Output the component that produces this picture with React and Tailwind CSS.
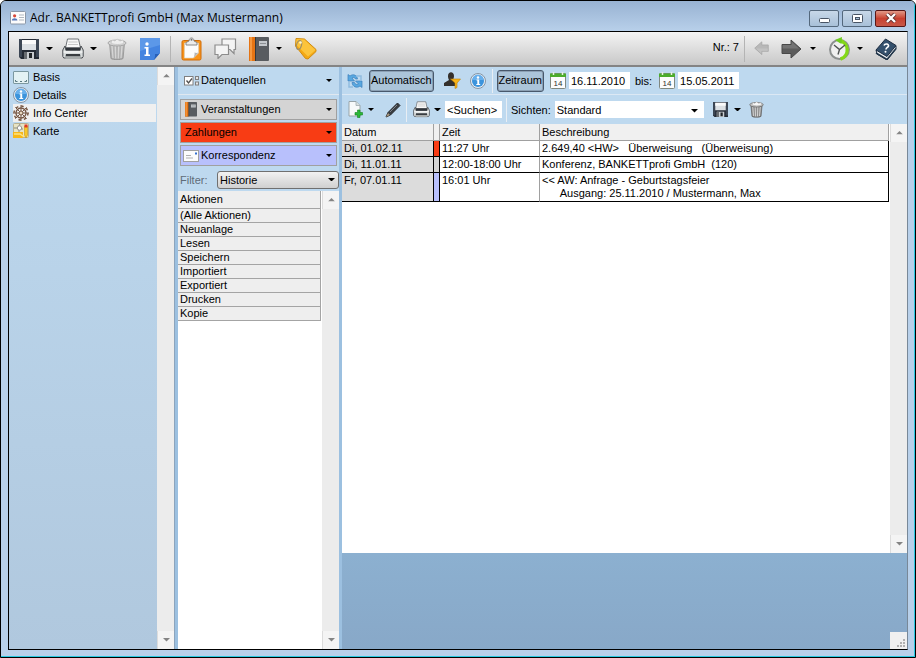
import { useState } from "react";

const NAV = [
  { label: "Basis", Icon: CardIcon },
  { label: "Details", Icon: InfoIcon },
  { label: "Info Center", Icon: WheelIcon },
  { label: "Karte", Icon: MapIcon },
];

const ACTIONS = [
  "(Alle Aktionen)",
  "Neuanlage",
  "Lesen",
  "Speichern",
  "Importiert",
  "Exportiert",
  "Drucken",
  "Kopie",
];

const ENTRIES = [
  {
    date: "Di, 01.02.11",
    time: "11:27 Uhr",
    color: "bg-[#f83c14]",
    lines: ["2.649,40 <HW>   Überweisung   (Überweisung)"],
  },
  {
    date: "Di, 11.01.11",
    time: "12:00-18:00 Uhr",
    color: "bg-[#d4d4d4]",
    lines: ["Konferenz, BANKETTprofi GmbH  (120)"],
  },
  {
    date: "Fr, 07.01.11",
    time: "16:01 Uhr",
    color: "bg-[#b8c0fc]",
    lines: ["<< AW: Anfrage - Geburtstagsfeier", "      Ausgang: 25.11.2010 / Mustermann, Max"],
  },
];

/* ---------- icons ---------- */

function Caret({ className = "w-[7px]" }) {
  return (
    <svg viewBox="0 0 8 4" className={`shrink-0 ${className}`} aria-hidden="true">
      <path d="M0 0h8L4 4z" fill="currentColor" />
    </svg>
  );
}

function ContactIcon() {
  return (
    <svg viewBox="0 0 16 14" className="w-4 shrink-0" aria-hidden="true">
      <rect x=".5" y=".5" width="15" height="12.5" rx="1" fill="#fcfcfc" stroke="#8c98a8" />
      <circle cx="4.600" cy="4.800" r="1.600" fill="#d84838" />
      <path d="M1.800 9.500c0-3 5.600-3 5.600 0z" fill="#5878b8" />
      <path d="M9 4h5M9 6.500h5M9 9h5" stroke="#b0b8c0" />
    </svg>
  );
}

function SaveIcon({ className = "w-5" }) {
  return (
    <svg viewBox="0 0 20 20" className={`shrink-0 ${className}`} aria-hidden="true">
      <path d="M0 0h20v20H2l-2-2z" fill="#242a34" />
      <path d="M0 0h3v18H0zM17 0h3v18h-3z" fill="#3c4654" />
      <path d="M3 1h14v10H3z" fill="#dce0e4" />
      <path d="M3 1h14v4H3z" fill="#fafafa" />
      <path d="M5 13h10v7H5z" fill="#c8ccd0" />
      <path d="M5 13h3v7H5z" fill="#686c70" />
      <path d="M10 14h3v5h-3z" fill="#202428" />
    </svg>
  );
}

function PrintIcon({ className = "w-[22px]" }) {
  return (
    <svg viewBox="0 0 22 22" className={`shrink-0 ${className}`} aria-hidden="true">
      <path d="M5.500 1h11l2 9h-15z" fill="#f8f8f8" stroke="#707478" />
      <path d="M6.500 4h9M6 6.500h10" stroke="#c8c8c8" />
      <path d="M3 8 .8 12v6.500l1 1.500h18.400l1-1.500V12L19 8l-1 4H4z" fill="#d8dcdc" stroke="#484c50" />
      <path d="M4 9.500h14l.5 3h-15z" fill="#30343a" />
      <path d="M1.500 14h19" stroke="#fff" strokeWidth="1.200" />
      <path d="M4 16h14l.500 2.500h-15z" fill="#383c40" />
      <path d="M3.500 18.500h15V21h-15z" fill="#a8acac" />
    </svg>
  );
}

function TrashIcon({ className = "w-5", faded = false }) {
  return (
    <svg viewBox="0 0 20 22" className={`shrink-0 ${className} ${faded ? "opacity-50" : ""}`} aria-hidden="true">
      <path d="m2.500 5 1.500 15.500c2 1.500 10 1.500 12 0L17.500 5z" fill="#8c8c8c" stroke="#606060" />
      <path d="m5 8 1 12M8.300 8l.4 12.500M11.700 8l-.4 12.500M15 8l-1 12" stroke="#d4d4d4" strokeWidth="1.300" />
      <ellipse cx="10" cy="5" rx="9" ry="3" fill="#c8c8c8" stroke="#6c6c6c" />
      <path d="m4 5 1-3 3 1 2-2 3 2 3-1 1 3c-3 2-10 2-13 0z" fill="#f6f6f6" stroke="#9c9c9c" strokeWidth=".7" />
    </svg>
  );
}

function NoteIcon() {
  return (
    <svg viewBox="0 0 20 22" className="w-5 shrink-0" aria-hidden="true">
      <path d="M0 0h20v15l-6 7H0z" fill="#4484e0" />
      <path d="M0 0h20v7L0 13z" fill="#5c98e8" />
      <path d="M20 15c-2 1.500-5 1-5 1 .5 2-1 6-1 6z" fill="#2860b8" />
      <circle cx="7" cy="6" r="1.700" fill="#fff" />
      <path d="M4.500 9h4v7.500H10V18H4.500v-1.500H6v-6H4.500z" fill="#fff" />
    </svg>
  );
}

function ClipboardIcon() {
  return (
    <svg viewBox="0 0 21 24" className="w-[21px] shrink-0" aria-hidden="true">
      <rect x="1" y="3.500" width="19" height="19.500" rx="1.500" fill="#f8941c" stroke="#d06c08" />
      <path d="M3.500 6h14v10l-5 5h-9z" fill="#fcfcfc" stroke="#d8d0c0" strokeWidth=".6" />
      <path d="M17.500 15.500c-2 1-4 0-4 0 .5 2-1 5.500-1 5.500z" fill="#b4b4b4" />
      <path d="M5 8V5.500l3-1.500c0-4 5-4 5 0l3 1.500V8z" fill="#ececec" stroke="#808080" strokeWidth=".9" />
      <circle cx="10.500" cy="2.800" r="1" fill="#707070" />
    </svg>
  );
}

function ChatIcon() {
  return (
    <svg viewBox="0 0 23 21" className="w-[23px] shrink-0" aria-hidden="true">
      <g fill="#f4f4f4" stroke="#8c8c8c" strokeWidth="1.200">
        <path d="M8 1h13.500v10.500H20v4l-4-4H8z" />
        <path d="M1 7h13.500v9.500H8l-4 4v-4H1z" />
      </g>
    </svg>
  );
}

function BinderIcon({ className = "w-5" }) {
  return (
    <svg viewBox="0 0 20 24" className={`shrink-0 ${className}`} aria-hidden="true">
      <rect x="0" y="0" width="20" height="24" rx="1" fill="#585c60" />
      <path d="M0 0h6v24H0z" fill="#e47414" />
      <path d="M1 0h2v24H1z" fill="#f49840" />
      <path d="M6 0h1v24H6z" fill="#34383c" />
      <path d="M10 4h8v5h-8z" fill="#c4c8cc" />
      <path d="M11 6.500h6" stroke="#8c9094" />
    </svg>
  );
}

function TagIcon() {
  return (
    <svg viewBox="0 0 23 23" className="w-[23px] shrink-0" aria-hidden="true">
      <path d="M2 1.500 10.500 2 22 12.500v2L14 22l-2.500-.5L1.500 9z" fill="#f4a814" stroke="#d08c10" />
      <path d="m2.500 2 7.700.5L21.500 13 14 19.500 2 7.500z" fill="#fcc43c" />
      <ellipse cx="5" cy="8" rx="2.500" ry="4.500" fill="none" stroke="#a09068" strokeWidth="1.200" transform="rotate(15 5 8)" />
      <circle cx="6.500" cy="5.500" r="1.300" fill="#fff4d0" />
    </svg>
  );
}

function ArrowIcon({ className, flip = false, dark = false }) {
  return (
    <svg viewBox="0 0 21 20" className={`shrink-0 ${className} ${flip ? "rotate-180" : ""}`} aria-hidden="true">
      <path
        d="M1 5.500h9V1l10 9-10 9v-4.500H1z"
        fill={dark ? "#5c5c5c" : "#b8b8b8"}
        stroke={dark ? "#484848" : "#a4a4a4"}
      />
      <path d="M1.500 6h9V2.500L18 9.500H1.500z" fill="#fff" opacity=".15" />
    </svg>
  );
}

function ClockIcon() {
  return (
    <svg viewBox="0 0 24 24" className="w-6 shrink-0" aria-hidden="true">
      <circle cx="11.500" cy="12.500" r="9.500" fill="#f0f0f0" stroke="#8c9090" strokeWidth="2" />
      <path d="M11 3.500a9.500 9.500 0 0 1 1.500 18.500" fill="none" stroke="#84d818" strokeWidth="3.400" />
      <path d="m14 0-7 3 6.500 4z" fill="#70cc20" />
      <path d="m6 8 5.500 4.500L17 8M11.500 12.500l-1.500 5" fill="none" stroke="#505454" strokeWidth="1.400" />
    </svg>
  );
}

function HelpBookIcon() {
  return (
    <svg viewBox="0 0 22 22" className="w-[22px] shrink-0" aria-hidden="true">
      <path d="m1 12 1 4 10 6 9-11V8z" fill="#e8ecf0" stroke="#1c2c40" />
      <path d="M1 12 10.500 1 21 7.500 12 18.500z" fill="#34506c" stroke="#1c2c40" />
      <path d="m1 15 11 6.500 9-11" fill="none" stroke="#24384c" strokeWidth="1.500" />
      <path d="M9 7.500c1-2.500 5-1.500 4.500.5-.3 1.500-2.500 1.500-2.500 3.500" fill="none" stroke="#fff" strokeWidth="1.600" />
      <circle cx="10.500" cy="13.700" r="1" fill="#fff" />
    </svg>
  );
}

function CardIcon() {
  return (
    <svg viewBox="0 0 16 13" className="w-4 shrink-0" aria-hidden="true">
      <rect x=".5" y=".5" width="15" height="12" rx=".5" fill="#e4f2f4" stroke="#7c98a0" />
      <path d="M2.500 9v1.500h2M11.500 10.500h2V9M7 10.500h2" fill="none" stroke="#587880" />
    </svg>
  );
}

function InfoIcon() {
  return (
    <svg viewBox="0 0 16 16" className="w-4 shrink-0" aria-hidden="true">
      <circle cx="8" cy="8" r="7.500" fill="#e8eef4" stroke="#8494a4" />
      <circle cx="8" cy="8" r="6" fill="#3c94dc" />
      <path d="M2.500 7a5.500 5.500 0 0 1 11 0z" fill="#68b0ec" />
      <circle cx="8" cy="4.500" r="1.200" fill="#fff" />
      <path d="M6.500 6.500h2.700v4.500h1v1H6.300v-1h1V7.500h-.8z" fill="#fff" />
    </svg>
  );
}

function WheelIcon() {
  return (
    <svg viewBox="0 0 16 16" className="w-4 shrink-0" fill="none" stroke="#745440" aria-hidden="true">
      <circle cx="8" cy="8" r="5" strokeWidth="1.300" />
      <circle cx="8" cy="8" r="7" strokeWidth="1.400" strokeDasharray="2.500 3" />
      <path d="M8 0v16M0 8h16M2.300 2.300l11.400 11.400M13.700 2.300 2.300 13.700" />
      <circle cx="8" cy="8" r="2" fill="#e8d8c0" />
    </svg>
  );
}

function MapIcon() {
  return (
    <svg viewBox="0 0 16 16" className="w-4 shrink-0" aria-hidden="true">
      <rect x=".5" y=".5" width="15" height="14" rx="1" fill="#e8e4c4" stroke="#b8b090" />
      <path d="M0 9h10v6H0z" fill="#f8b818" />
      <path d="M1 5h4l2-4M6 9V6h4" fill="none" stroke="#8c8c80" />
      <circle cx="6.500" cy="5" r="2.200" fill="#fff" stroke="#989890" />
      <path d="M1 11h6l3 2h5" fill="none" stroke="#fce484" strokeWidth="1.500" />
      <path d="M11.500 3h3v9l-1.500 3-1.500-3z" fill="#f8c828" stroke="#b88810" strokeWidth=".5" />
      <path d="M11.500 1.500h3v3h-3z" fill="#e03828" />
    </svg>
  );
}

function SourcesIcon() {
  return (
    <svg viewBox="0 0 15 10" className="w-[15px] shrink-0" fill="none" stroke="#808080" aria-hidden="true">
      <rect x=".5" y=".5" width="8.500" height="8.500" fill="#fff" />
      <path d="m2.500 4.500 2 2.500L8 2.500" stroke="#505050" strokeWidth="1.300" />
      <rect x="11.500" y=".5" width="3" height="3" fill="#e4e4e4" />
      <rect x="11.500" y="6" width="3" height="3" fill="#e4e4e4" />
    </svg>
  );
}

function LetterIcon() {
  return (
    <svg viewBox="0 0 16 12" className="w-4 shrink-0" aria-hidden="true">
      <rect x=".5" y=".5" width="15" height="11" fill="#fcfcfc" stroke="#a0a0a0" />
      <path d="M3 5.500h5M3 8h7" stroke="#b0b0b0" />
      <path d="M12 2.500h2v2h-2z" fill="#3470d0" />
    </svg>
  );
}

function RefreshIcon() {
  return (
    <svg viewBox="0 0 16 16" className="w-4 shrink-0" aria-hidden="true">
      <g fill="#58a8e0" stroke="#3c80bc" strokeWidth=".7">
        <path d="M1 8V1.500l2 1.500c3-2.500 7-1 7.500 3h-2C8 4.500 6.500 4 5 5l2.500 3z" />
        <path d="M15 8v6.500l-2-1.500c-3 2.500-7.500 1-8-3.500h2.500c.5 2 2.500 2.500 4 1.500L8.500 8z" />
      </g>
      <path d="M9 3h5v5" fill="none" stroke="#90bce0" strokeWidth="1.500" />
      <path d="M2 9v5h4" fill="none" stroke="#90bce0" strokeWidth="1.500" />
    </svg>
  );
}

function UserFilterIcon() {
  return (
    <svg viewBox="0 0 17 17" className="w-[17px] shrink-0" aria-hidden="true">
      <path d="M4 4c0-5 6-5 6 0 0 2-.7 3-1.200 3.800L13 10v4H0v-3l5-3C4.300 6.500 4 5.500 4 4z" fill="#34302c" />
      <path d="M6.500 7h10L13 11v4.500l-2 1V11z" fill="#f8b418" stroke="#c08008" strokeWidth=".6" />
    </svg>
  );
}

function CalendarIcon() {
  return (
    <svg viewBox="0 0 16 17" className="w-4 shrink-0" aria-hidden="true">
      <rect x=".5" y="1.500" width="15" height="15" rx="1" fill="#fcfcfc" stroke="#808880" />
      <path d="M0 1.500h16V5H0z" fill="#4cac2c" />
      <path d="M3.500 0v3M12.500 0v3" stroke="#e8f0e4" strokeWidth="1.500" />
      <text x="8" y="14" textAnchor="middle" fontSize="8" fill="#303030" className="font-['Liberation_Sans',sans-serif]">
        14
      </text>
    </svg>
  );
}

function NewDocIcon() {
  return (
    <svg viewBox="0 0 15 17" className="w-[15px] shrink-0" aria-hidden="true">
      <path d="M1 .5h7l4 4V15H1z" fill="#f8fafa" stroke="#98a4a8" />
      <path d="M8 .5v4h4" fill="#d8e0e0" stroke="#98a4a8" strokeWidth=".7" />
      <path d="M9.500 9h2.500v2.500h2.500V14H12v2.500H9.500V14H7v-2.500h2.500z" fill="#2cb838" stroke="#148420" strokeWidth=".6" />
    </svg>
  );
}

function PencilIcon() {
  return (
    <svg viewBox="0 0 16 16" className="w-4 shrink-0" aria-hidden="true">
      <path d="m1 15 2-4.500L12.500 1l2.500 2.500L5.500 13z" fill="#383c40" stroke="#24282c" />
      <path d="m5 10 7-7" stroke="#80848c" />
      <path d="m1 15 2-4 2 2z" fill="#a89880" />
    </svg>
  );
}

/* ---------- widgets ---------- */

function ScrollBar() {
  return (
    <div className="flex w-[17px] shrink-0 flex-col justify-between bg-[#ececec] text-[#848484]">
      <button type="button" aria-label="Nach oben" className="flex h-[18px] items-center justify-center border-l border-[#dcdcdc] bg-[#f4f4f4]">
        <Caret className="w-[7px] rotate-180" />
      </button>
      <button type="button" aria-label="Nach unten" className="flex h-[18px] items-center justify-center border-l border-[#dcdcdc] bg-[#f4f4f4]">
        <Caret />
      </button>
    </div>
  );
}

function IconButton({ label, className = "", children }) {
  return (
    <button type="button" aria-label={label} className={`flex shrink-0 items-center ${className}`}>
      {children}
    </button>
  );
}

function SourceButton({ label, className = "", children }) {
  return (
    <button
      type="button"
      className={`flex h-[21px] w-full items-center border border-[#a0a0a0] pr-1 ${className}`}
    >
      {children}
      <span className="pb-0.5">{label}</span>
      <Caret className="ml-auto w-[6px]" />
    </button>
  );
}

function ToggleButton({ pressed, onClick, children }) {
  return (
    <button
      type="button"
      aria-pressed={pressed}
      onClick={onClick}
      className="h-[22px] rounded-[3px] border border-[#48586c] bg-[#abc4d9] px-px pb-0.5 inset-ring inset-ring-[#8ca0b4]"
    >
      {children}
    </button>
  );
}

function Separator() {
  return <div className="h-6 w-px shrink-0 bg-[#e8eef4]" />;
}

/* ---------- sections ---------- */

function TitleBar() {
  const frame = "flex h-[17px] w-[30px] items-center justify-center rounded-[2px] border border-[#54687c]";
  return (
    <header className="flex h-[30px] shrink-0 items-center gap-1 bg-linear-to-b from-[#98b2d2] to-[#b8d0ea] pt-1 pr-2 pl-[9px]">
      <ContactIcon />
      <h1 className="truncate font-['Open_Sans',sans-serif] text-[12px] leading-4">
        Adr. BANKETTprofi GmbH (Max Mustermann)
      </h1>
      <div className="ml-auto flex gap-[3px]">
        <button type="button" aria-label="Minimieren" className={`${frame} bg-linear-to-b from-[#c8d8e8] to-[#a8c0d8]`}>
          <svg viewBox="0 0 11 5" className="mt-1 w-[11px]" aria-hidden="true">
            <rect x=".5" y=".5" width="10" height="4" rx="1" fill="#fff" stroke="#485464" />
          </svg>
        </button>
        <button type="button" aria-label="Maximieren" className={`${frame} bg-linear-to-b from-[#c8d8e8] to-[#a8c0d8]`}>
          <svg viewBox="0 0 11 9" className="w-[11px]" aria-hidden="true">
            <rect x=".5" y=".5" width="10" height="8" rx="1" fill="#fff" stroke="#485464" />
            <rect x="3.500" y="3.500" width="4" height="2" fill="#a8c0d8" stroke="#485464" />
          </svg>
        </button>
        <button
          type="button"
          aria-label="Schließen"
          className="flex h-[17px] w-[31px] items-center justify-center rounded-[2px] border border-[#581818] bg-linear-to-b from-[#e09888] via-[#c84030] to-[#c85848]"
        >
          <svg viewBox="0 0 12 10" className="w-3" aria-hidden="true">
            <path d="m2 1 8 8M10 1 2 9" stroke="#603030" strokeWidth="4" />
            <path d="m2 1 8 8M10 1 2 9" stroke="#fff" strokeWidth="2.400" />
          </svg>
        </button>
      </div>
    </header>
  );
}

function MainToolbar() {
  return (
    <div className="flex h-[35px] shrink-0 items-center border-b-2 border-[#848484] bg-linear-to-b from-[#f4f4f4] to-[#c8c8c8] px-[10px]">
      <IconButton label="Speichern" className="gap-[7px]">
        <SaveIcon />
        <Caret />
      </IconButton>
      <IconButton label="Drucken" className="ml-[9px] gap-[6px]">
        <PrintIcon />
        <Caret />
      </IconButton>
      <IconButton label="Löschen" className="ml-[10px]">
        <TrashIcon faded />
      </IconButton>
      <IconButton label="Notiz" className="ml-[13px]">
        <NoteIcon />
      </IconButton>
      <div className="ml-[10px] h-[26px] w-px bg-[#b4b4b4]" />
      <IconButton label="Aufgabe" className="ml-[10px]">
        <ClipboardIcon />
      </IconButton>
      <IconButton label="Kontakt" className="ml-[12px]">
        <ChatIcon />
      </IconButton>
      <IconButton label="Veranstaltung" className="ml-[12px] gap-[7px]">
        <BinderIcon />
        <Caret className="w-[6px]" />
      </IconButton>
      <IconButton label="Etikett" className="ml-[12px]">
        <TagIcon />
      </IconButton>

      <span className="mb-1 ml-auto">Nr.: 7</span>
      <div className="ml-[5px] h-[26px] w-px bg-[#b4b4b4]" />
      <IconButton label="Zurück" className="ml-[9px]">
        <ArrowIcon className="w-[15px]" flip />
      </IconButton>
      <IconButton label="Weiter" className="ml-[12px] gap-[8px]">
        <ArrowIcon className="w-[21px]" dark />
        <Caret className="w-[6px]" />
      </IconButton>
      <IconButton label="Verlauf" className="ml-[12px] gap-[5px]">
        <ClockIcon />
        <Caret className="w-[6px]" />
      </IconButton>
      <IconButton label="Hilfe" className="ml-[12px]">
        <HelpBookIcon />
      </IconButton>
    </div>
  );
}

function Sidebar() {
  const [active, setActive] = useState("Info Center");
  return (
    <aside className="flex w-[165px] shrink-0 bg-linear-to-b from-[#bed9ef] to-[#b0c8de]">
      <nav className="flex-1 pl-1 pt-px">
        {NAV.map(({ label, Icon }) => (
          <button
            key={label}
            type="button"
            onClick={() => setActive(label)}
            className={`flex h-[18px] w-[143px] items-center gap-1 ${active === label ? "bg-[#f0f0f0]" : ""}`}
          >
            <Icon />
            <span>{label}</span>
          </button>
        ))}
      </nav>
      <ScrollBar />
    </aside>
  );
}

function FilterPanel() {
  return (
    <section className="flex w-[161px] shrink-0 flex-col bg-[#bed9ef]">
      <button type="button" className="flex h-[28px] items-center gap-[2px] border-b border-[#e0e8f0] pr-[7px] pl-[6px]">
        <SourcesIcon />
        <span className="pb-0.5">Datenquellen</span>
        <Caret className="ml-auto w-[6px]" />
      </button>
      <div className="flex flex-col gap-[2px] px-0.5 pt-1">
        <SourceButton label="Veranstaltungen" className="gap-1 bg-[#d4d4d4] pl-1">
          <BinderIcon className="w-[12px]" />
        </SourceButton>
        <SourceButton label="Zahlungen" className="bg-[#f83c14] pl-1" />
        <SourceButton label="Korrespondenz" className="gap-0.5 bg-[#b8c0fc] pl-0.5">
          <LetterIcon />
        </SourceButton>
      </div>
      <div className="flex h-[25px] shrink-0 items-center justify-between pt-0.5 pl-0.5">
        <label htmlFor="filter" className="text-[#606c78]">
          Filter:
        </label>
        <div className="relative w-[122px]">
          <select
            id="filter"
            className="block h-[18px] w-full appearance-none rounded-[3px] border border-[#707070] bg-linear-to-b from-[#f2f2f2] to-[#d0d0d0] pl-0.5 leading-4"
          >
            <option>Historie</option>
          </select>
          <Caret className="pointer-events-none absolute top-[7px] right-1 w-[7px]" />
        </div>
      </div>
      <div className="flex flex-1 bg-white">
        <div className="flex-1">
          <table className="w-[143px] border-collapse bg-[#eee] text-left">
            <thead>
              <tr>
                <th className="h-[17px] border-r border-b border-[#a4a4a4] py-0 pl-0.5 font-normal">Aktionen</th>
              </tr>
            </thead>
            <tbody>
              {ACTIONS.map((action) => (
                <tr key={action}>
                  <td className="h-[14px] border-r border-b border-[#a4a4a4] py-0 pl-0.5 leading-[13px]">{action}</td>
                </tr>
              ))}
            </tbody>
          </table>
        </div>
        <ScrollBar />
      </div>
    </section>
  );
}

function HistoryToolbar() {
  const [auto, setAuto] = useState(true);
  const [range, setRange] = useState(true);
  return (
    <div className="shrink-0 bg-[#bed9ef]">
      <div className="flex h-[28px] items-center border-b border-[#dce8f4] pl-[5px]">
        <IconButton label="Aktualisieren" className="mr-[6px]">
          <RefreshIcon />
        </IconButton>
        <ToggleButton pressed={auto} onClick={() => setAuto(!auto)}>
          Automatisch
        </ToggleButton>
        <IconButton label="Benutzerfilter" className="ml-[10px]">
          <UserFilterIcon />
        </IconButton>
        <IconButton label="Info" className="mr-[6px] ml-[9px]">
          <InfoIcon />
        </IconButton>
        <Separator />
        <div className="w-1" />
        <ToggleButton pressed={range} onClick={() => setRange(!range)}>
          Zeitraum
        </ToggleButton>
        <IconButton label="Kalender von" className="mr-[3px] ml-[6px]">
          <CalendarIcon />
        </IconButton>
        <input aria-label="Von" defaultValue="16.11.2010" className="h-[17px] w-[61px] bg-white px-0.5" />
        <label htmlFor="to" className="ml-[5px]">
          bis:
        </label>
        <IconButton label="Kalender bis" className="mr-[3px] ml-[7px]">
          <CalendarIcon />
        </IconButton>
        <input id="to" defaultValue="15.05.2011" className="h-[17px] w-[61px] bg-white px-0.5" />
      </div>
      <div className="flex h-[29px] items-center pl-[6px]">
        <IconButton label="Neu" className="gap-[5px]">
          <NewDocIcon />
          <Caret className="w-[6px]" />
        </IconButton>
        <IconButton label="Bearbeiten" className="mr-[5px] ml-[11px]">
          <PencilIcon />
        </IconButton>
        <Separator />
        <IconButton label="Liste drucken" className="mr-[4px] ml-[6px] gap-[4px]">
          <PrintIcon className="w-[17px]" />
          <Caret />
        </IconButton>
        <input aria-label="Suchen" defaultValue="<Suchen>" className="mr-[4px] h-[17px] w-[57px] bg-white px-0.5" />
        <Separator />
        <label htmlFor="view" className="mr-[4px] ml-1">
          Sichten:
        </label>
        <div className="relative w-[149px]">
          <select id="view" className="block h-[17px] w-full appearance-none bg-white pl-0.5 leading-4">
            <option>Standard</option>
          </select>
          <Caret className="pointer-events-none absolute top-[8px] right-[6px] w-[7px]" />
        </div>
        <IconButton label="Sicht speichern" className="ml-[9px] gap-[6px]">
          <SaveIcon className="w-[15px]" />
          <Caret />
        </IconButton>
        <IconButton label="Sicht löschen" className="ml-[8px]">
          <TrashIcon className="w-[15px]" />
        </IconButton>
      </div>
    </div>
  );
}

function HistoryTable() {
  return (
    <div className="flex flex-1 bg-white">
      <div className="flex-1 pr-px">
        <table className="w-full table-fixed border-separate border-spacing-0 text-left align-top">
          <colgroup>
            <col className="w-[92px]" />
            <col className="w-[6px]" />
            <col className="w-[100px]" />
            <col />
          </colgroup>
          <thead>
            <tr className="bg-[#f0f0f0]">
              <th className="h-[17px] border-r border-b border-[#a0a0a0] py-0 pl-0.5 font-normal">Datum</th>
              <th className="border-r border-b border-[#a0a0a0] p-0" aria-label="Quelle"></th>
              <th className="border-r border-b border-[#a0a0a0] py-0 pl-0.5 font-normal">Zeit</th>
              <th className="border-r border-b border-[#a0a0a0] py-0 pl-0.5 font-normal">Beschreibung</th>
            </tr>
          </thead>
          <tbody>
            {ENTRIES.map((e) => (
              <tr key={e.date} className="align-top leading-[13px]">
                <td className="border-r border-b border-black bg-[#dcdcdc] py-px pl-0.5">{e.date}</td>
                <td className={`border-r border-b border-black p-0 ${e.color}`}></td>
                <td className="border-r border-b border-r-[#a0a0a0] border-b-black py-px pl-0.5">{e.time}</td>
                <td className="border-r border-b border-black py-px pl-0.5 whitespace-pre">
                  {e.lines.map((line) => (
                    <div key={line}>{line}</div>
                  ))}
                </td>
              </tr>
            ))}
          </tbody>
        </table>
      </div>
      <ScrollBar />
    </div>
  );
}

export default function App() {
  return (
    <div className="flex min-h-screen flex-col overflow-hidden rounded-t-md border border-black bg-[#b8d0ea] font-['Liberation_Sans',sans-serif] text-[11px] leading-[14px] text-black">
      <div className="flex flex-1 flex-col border-r border-b border-r-[#28c8e0] border-b-[#28c8e0]">
        <TitleBar />
        <main className="mr-[6px] mb-[6px] ml-[7px] flex flex-1 flex-col border border-black border-r-[#788898]">
          <MainToolbar />
          <div className="flex flex-1 bg-[#9cc0e0]">
            <Sidebar />
            <div className="w-1 shrink-0 border-l border-[#8ca4bc]" />
            <FilterPanel />
            <div className="w-[3px] shrink-0" />
            <section className="flex min-w-0 flex-1 flex-col">
              <HistoryToolbar />
              <HistoryTable />
              <footer className="flex h-[96px] shrink-0 items-end justify-end bg-linear-to-b from-[#8cb0d0] to-[#88a8c8]">
                <svg viewBox="0 0 17 17" className="w-[17px] bg-[#f0f0f0]" fill="#b0b0b0" aria-hidden="true">
                  <path d="M13 7h2v2h-2zM10 10h2v2h-2zM13 10h2v2h-2zM7 13h2v2H7zM10 13h2v2h-2zM13 13h2v2h-2z" />
                </svg>
              </footer>
            </section>
          </div>
        </main>
      </div>
    </div>
  );
}
